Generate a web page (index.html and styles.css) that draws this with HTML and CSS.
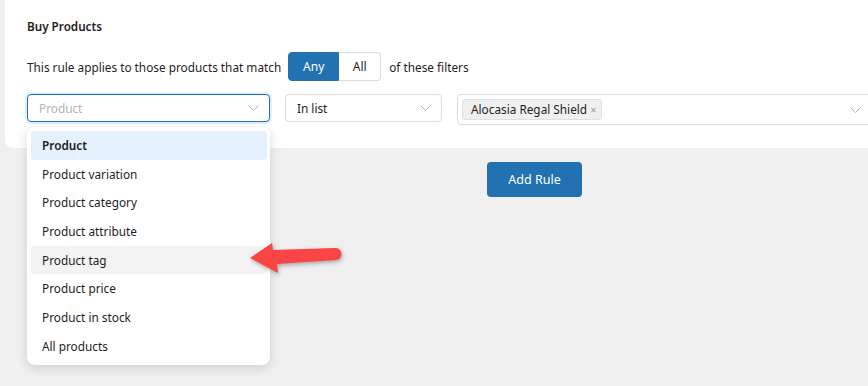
FILE: index.html
```html
<!DOCTYPE html>
<html lang="en">
<head>
    <meta charset="UTF-8">
    <title>Buy Products - Rule</title>
    <link rel="stylesheet" href="styles.css">
</head>
<body>
    <div class="card">
        <h2 class="card-title">Buy Products</h2>

        <div class="match-row">
            <span>This rule applies to those products that match</span>
            <div class="toggle">
                <button class="toggle-btn active">Any</button>
                <button class="toggle-btn">All</button>
            </div>
            <span>of these filters</span>
        </div>

        <div class="filter-row">
            <div class="select-wrap">
                <div class="select select-type focused">
                    <span class="placeholder">Product</span>
                    <svg class="chevron" width="11" height="6" viewBox="0 0 11 6"><path d="M0.5 0.5 L5.5 5.5 L10.5 0.5" fill="none" stroke="#b0b0b0" stroke-width="1"/></svg>
                </div>
                <ul class="dropdown">
                    <li class="selected">Product</li>
                    <li>Product variation</li>
                    <li>Product category</li>
                    <li>Product attribute</li>
                    <li class="hover">Product tag</li>
                    <li>Product price</li>
                    <li>Product in stock</li>
                    <li>All products</li>
                </ul>
                <svg class="arrow" width="100" height="40" viewBox="0 0 100 40">
                    <path d="M6 20 L28 5 L29 12 L91 10 A6 6 0 0 1 92 22 L33 26 L34 35 Z" fill="#fa4545" />
                </svg>
            </div>

            <div class="select select-op">
                <span>In list</span>
                <svg class="chevron" width="11" height="6" viewBox="0 0 11 6"><path d="M0.5 0.5 L5.5 5.5 L10.5 0.5" fill="none" stroke="#b0b0b0" stroke-width="1"/></svg>
            </div>

            <div class="select select-values">
                <span class="chip">Alocasia Regal Shield <span class="chip-x">×</span></span>
                <svg class="chevron" width="11" height="6" viewBox="0 0 11 6"><path d="M0.5 0.5 L5.5 5.5 L10.5 0.5" fill="none" stroke="#b0b0b0" stroke-width="1"/></svg>
            </div>
        </div>
    </div>

    <div class="actions">
        <button class="add-rule">Add Rule</button>
    </div>
</body>
</html>
```

FILE: styles.css
```css
body {
    margin: 0;
    background-color: #f0f0f0;
    font-family: "Noto Sans", "Open Sans", sans-serif;
    font-size: 11.8px;
    color: #1e1e1e;
    overflow: hidden;
    height: 386px;
}

.card {
    background-color: #fff;
    margin: 0 -30px 0 5px;
    padding: 17px 22px 23px 22px;
    border-radius: 0 0 0 8px;
}

.card-title {
    margin: 0;
    font-size: 11.7px;
    font-weight: 600;
    line-height: 18px;
}

.match-row {
    display: flex;
    align-items: center;
    gap: 7px;
    margin-top: 17px;
}

.toggle {
    display: flex;
    height: 29px;
    margin-right: 1px;
}

.toggle-btn {
    font-family: inherit;
    font-size: 12px;
    border: 1px solid #dcdcdc;
    background-color: #fff;
    color: #1e1e1e;
    padding: 0;
    width: 42px;
    cursor: pointer;
}

.toggle-btn.active {
    width: 51px;
    background-color: #2271b1;
    border-color: #2271b1;
    color: #fff;
    border-radius: 4px 0 0 4px;
}

.toggle-btn:last-child {
    border-left: none;
    border-radius: 0 4px 4px 0;
}

.filter-row {
    display: flex;
    gap: 15px;
    margin-top: 13px;
    align-items: flex-start;
}

.select-wrap {
    position: relative;
}

.select {
    display: flex;
    align-items: center;
    justify-content: space-between;
    height: 28px;
    box-sizing: border-box;
    border: 1px solid #dcdcdc;
    border-radius: 4px;
    padding: 0 10px 0 11px;
    background-color: #fff;
}

.select-type {
    width: 243px;
}

.select-type.focused {
    border-color: #2271b1;
    box-shadow: 0 0 0 2px #e3f0fb;
}

.placeholder {
    color: #b4b4b4;
}

.select-op {
    width: 157px;
}

.select-values {
    flex: 1;
    height: 31px;
    padding: 0 14px 0 4px;
}

.chip {
    display: inline-block;
    background-color: #f0f0f0;
    border: 1px solid #e0e0e0;
    border-radius: 3px;
    padding: 2px 5px 2px 8px;
    line-height: 15px;
}

.chip-x {
    color: #999;
    font-size: 11px;
}

.dropdown {
    position: absolute;
    top: 33px;
    left: 0;
    width: 243px;
    margin: 0;
    padding: 4px 3px 4px 4px;
    box-sizing: border-box;
    list-style: none;
    background-color: #fff;
    border-radius: 8px;
    box-shadow: 0 3px 12px rgba(0, 0, 0, 0.14);
    z-index: 2;
}

.dropdown li {
    height: 28.7px;
    line-height: 28.7px;
    padding-left: 11px;
    border-radius: 4px;
}

.dropdown li.selected {
    background-color: #e5f1fc;
    font-weight: 600;
}

.dropdown li.hover {
    background-color: #f3f3f3;
}

.arrow {
    position: absolute;
    left: 217px;
    top: 144px;
    z-index: 3;
    filter: drop-shadow(1px 2px 2px rgba(0, 0, 0, 0.3));
}

.actions {
    padding: 14px 0 0 487px;
}

.add-rule {
    font-family: inherit;
    font-size: 12.5px;
    width: 95px;
    height: 35px;
    background-color: #2271b1;
    color: #fff;
    border: none;
    border-radius: 4px;
    cursor: pointer;
}
```
